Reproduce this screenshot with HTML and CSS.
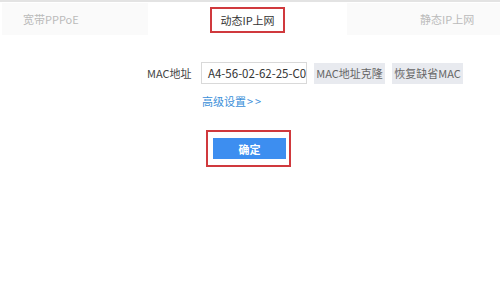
FILE: index.html
```html
<!DOCTYPE html>
<html lang="zh-CN">
<head>
<meta charset="utf-8">
<title>动态IP上网</title>
<link rel="stylesheet" href="styles.css">
</head>
<body>
<div class="tabs">
  <div class="tab tab-left">宽带PPPoE</div>
  <div class="tab tab-mid"><span class="mark">动态IP上网</span></div>
  <div class="tab tab-right">静态IP上网</div>
</div>
<div class="form">
  <div class="row">
    <span class="label">MAC地址</span>
    <span class="input">A4-56-02-62-25-C0</span>
    <span class="btn">MAC地址克隆</span>
    <span class="btn">恢复缺省MAC</span>
  </div>
  <div class="link">高级设置<span class="arrows">&gt;&gt;</span></div>
  <div class="ok-wrap"><span class="ok">确定</span></div>
</div>
</body>
</html>
```
FILE: styles.css
```css
html, body {
  margin: 0;
  padding: 0;
  background: #fff;
  font-family: "Noto Sans CJK SC", "Liberation Sans", sans-serif;
  font-size: 11px;
  color: #333;
  white-space: nowrap;
}
.tabs {
  display: flex;
  border-top: 2px solid #e3e3e3;
  padding: 1px 0 0 2px;
  height: 32px;
}
.tab {
  display: flex;
  align-items: center;
  height: 32px;
}
.tab-left {
  width: 146px;
  background: #fafafa;
  color: #bbbbbb;
  padding-left: 21px;
  box-sizing: border-box;
}
.tab-mid {
  flex: 1;
  justify-content: center;
  align-items: flex-start;
}
.mark {
  margin-top: 4px;
  width: 75px;
  height: 26px;
  box-sizing: border-box;
  border: 2px solid #d0393d;
  display: flex;
  align-items: center;
  justify-content: center;
  color: #333;
}
.tab-right {
  width: 153px;
  background: #fafafa;
  color: #bbbbbb;
  padding-left: 73px;
  box-sizing: border-box;
}
.form {
  padding-top: 27px;
}
.row {
  display: flex;
  align-items: center;
  padding-left: 147px;
  height: 22px;
}
.label {
  color: #444;
  width: 54px;
}
.input {
  width: 106px;
  height: 22px;
  box-sizing: border-box;
  border: 1px solid #d9d9d9;
  display: flex;
  align-items: center;
  padding-left: 6px;
  color: #333;
  font-size: 11.5px;
  margin-right: 7px;
  overflow: hidden;
}
.btn {
  width: 71px;
  height: 21px;
  background: #e8eaef;
  color: #666;
  display: flex;
  align-items: center;
  justify-content: center;
  margin-right: 7px;
}
.link {
  margin-top: 9px;
  padding-left: 202px;
  color: #3b8fd9;
  height: 17px;
  line-height: 17px;
}
.arrows {
  letter-spacing: 2px;
  margin-left: 1px;
}
.ok-wrap {
  margin: 20px 0 0 206px;
  width: 85px;
  height: 37px;
  box-sizing: border-box;
  border: 2px solid #d0393d;
  padding: 6px 0 0 5px;
}
.ok {
  display: flex;
  width: 73px;
  height: 21px;
  background: #3d8ef0;
  color: #fff;
  font-weight: bold;
  align-items: center;
  justify-content: center;
}
```
